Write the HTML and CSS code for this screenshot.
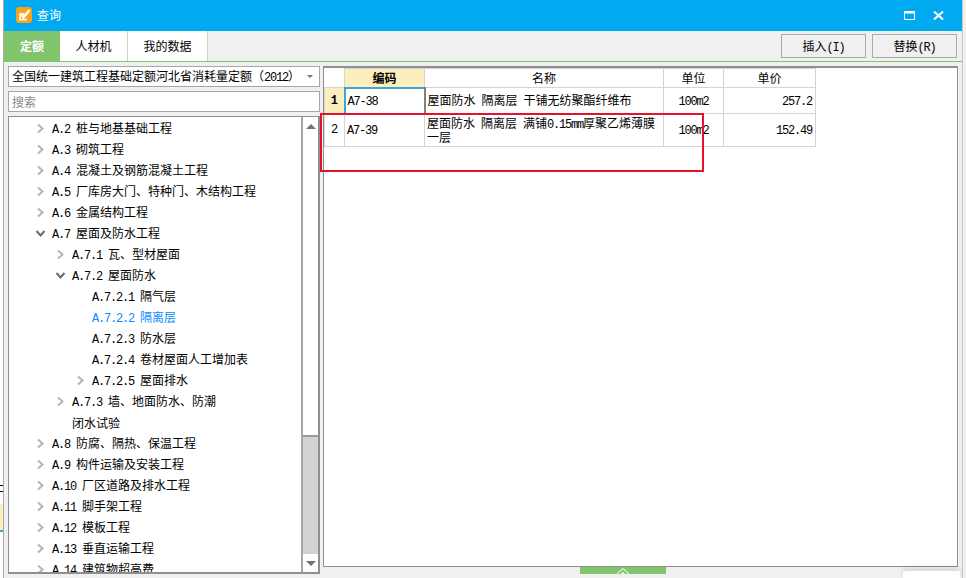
FILE: index.html
```html
<!DOCTYPE html>
<html lang="zh">
<head>
<meta charset="utf-8">
<title>查询</title>
<link rel="stylesheet" href="styles.css">
</head>
<body>
<div class="desk">
  <div class="backdrop"><span class="back-glyph">上</span><span class="back-cell"></span></div>
  <main class="window">
    <header class="titlebar">
      <svg class="logo" width="16" height="16" viewBox="0 0 16 16"><rect width="16" height="16" rx="3" fill="#f9a31a"/><path d="M3 6h6l-1 2H5v4h5l1-1v2.500H3z" fill="#fff3d8"/><path d="M5.500 8l2 2.500L13.500 3" fill="none" stroke="#fff" stroke-width="2.400"/></svg>
      <span class="title">查询</span>
      <span class="win-btns">
        <svg width="11" height="9" viewBox="0 0 11 9"><rect x="0.500" y="0.500" width="10" height="8" fill="none" stroke="#fff"/><rect x="0" y="0" width="11" height="2.500" fill="#fff"/></svg>
        <svg width="11" height="9" viewBox="0 0 11 9"><path d="M1 0.500l9 8M10 0.500l-9 8" stroke="#fff" stroke-width="2" fill="none"/></svg>
      </span>
    </header>
    <nav class="toolbar">
      <div class="tab tab-on">定额</div>
      <div class="tab tab-a">人材机</div>
      <div class="tab tab-b">我的数据</div>
      <div class="actions">
        <button class="btn">插入<span class="m">(I)</span></button>
        <button class="btn">替换<span class="m">(R)</span></button>
      </div>
    </nav>
    <section class="body">
      <aside class="left">
        <div class="combo"><span>全国统一建筑工程基础定额河北省消耗量定额（<span class="m">2012</span>）</span><i class="caret"></i></div>
        <div class="search">搜索</div>
        <div class="tree">
          <div class="list">
            <div class="row l1"><svg class="ar" viewBox="0 0 9 9"><path d="M2 0.500L6.500 4.500L2 8.500" /></svg><span><span class="m">A.2 </span>桩与地基基础工程</span></div>
            <div class="row l1"><svg class="ar" viewBox="0 0 9 9"><path d="M2 0.500L6.500 4.500L2 8.500" /></svg><span><span class="m">A.3 </span>砌筑工程</span></div>
            <div class="row l1"><svg class="ar" viewBox="0 0 9 9"><path d="M2 0.500L6.500 4.500L2 8.500" /></svg><span><span class="m">A.4 </span>混凝土及钢筋混凝土工程</span></div>
            <div class="row l1"><svg class="ar" viewBox="0 0 9 9"><path d="M2 0.500L6.500 4.500L2 8.500" /></svg><span><span class="m">A.5 </span>厂库房大门、特种门、木结构工程</span></div>
            <div class="row l1"><svg class="ar" viewBox="0 0 9 9"><path d="M2 0.500L6.500 4.500L2 8.500" /></svg><span><span class="m">A.6 </span>金属结构工程</span></div>
            <div class="row l1"><svg class="ar open" viewBox="0 0 9 9"><path d="M0.500 2L4.500 6.500L8.500 2" /></svg><span><span class="m">A.7 </span>屋面及防水工程</span></div>
            <div class="row l2"><svg class="ar" viewBox="0 0 9 9"><path d="M2 0.500L6.500 4.500L2 8.500" /></svg><span><span class="m">A.7.1 </span>瓦、型材屋面</span></div>
            <div class="row l2"><svg class="ar open" viewBox="0 0 9 9"><path d="M0.500 2L4.500 6.500L8.500 2" /></svg><span><span class="m">A.7.2 </span>屋面防水</span></div>
            <div class="row l3"><i class="ar"></i><span><span class="m">A.7.2.1 </span>隔气层</span></div>
            <div class="row l3 sel"><i class="ar"></i><span><span class="m">A.7.2.2 </span>隔离层</span></div>
            <div class="row l3"><i class="ar"></i><span><span class="m">A.7.2.3 </span>防水层</span></div>
            <div class="row l3"><i class="ar"></i><span><span class="m">A.7.2.4 </span>卷材屋面人工增加表</span></div>
            <div class="row l3"><svg class="ar" viewBox="0 0 9 9"><path d="M2 0.500L6.500 4.500L2 8.500" /></svg><span><span class="m">A.7.2.5 </span>屋面排水</span></div>
            <div class="row l2"><svg class="ar" viewBox="0 0 9 9"><path d="M2 0.500L6.500 4.500L2 8.500" /></svg><span><span class="m">A.7.3 </span>墙、地面防水、防潮</span></div>
            <div class="row l2"><i class="ar"></i><span>闭水试验</span></div>
            <div class="row l1"><svg class="ar" viewBox="0 0 9 9"><path d="M2 0.500L6.500 4.500L2 8.500" /></svg><span><span class="m">A.8 </span>防腐、隔热、保温工程</span></div>
            <div class="row l1"><svg class="ar" viewBox="0 0 9 9"><path d="M2 0.500L6.500 4.500L2 8.500" /></svg><span><span class="m">A.9 </span>构件运输及安装工程</span></div>
            <div class="row l1"><svg class="ar" viewBox="0 0 9 9"><path d="M2 0.500L6.500 4.500L2 8.500" /></svg><span><span class="m">A.10 </span>厂区道路及排水工程</span></div>
            <div class="row l1"><svg class="ar" viewBox="0 0 9 9"><path d="M2 0.500L6.500 4.500L2 8.500" /></svg><span><span class="m">A.11 </span>脚手架工程</span></div>
            <div class="row l1"><svg class="ar" viewBox="0 0 9 9"><path d="M2 0.500L6.500 4.500L2 8.500" /></svg><span><span class="m">A.12 </span>模板工程</span></div>
            <div class="row l1"><svg class="ar" viewBox="0 0 9 9"><path d="M2 0.500L6.500 4.500L2 8.500" /></svg><span><span class="m">A.13 </span>垂直运输工程</span></div>
            <div class="row l1"><svg class="ar" viewBox="0 0 9 9"><path d="M2 0.500L6.500 4.500L2 8.500" /></svg><span><span class="m">A.14 </span>建筑物超高费</span></div>
          </div>
          <div class="scroll">
            <div class="sbtn"><i class="tri-up"></i></div>
            <div class="thumb"></div>
            <div class="track"></div>
            <div class="sbtn"><i class="tri-down"></i></div>
          </div>
        </div>
      </aside>
      <div class="right">
        <table class="grid">
          <colgroup><col class="c0"><col class="c1"><col class="c2"><col class="c3"><col class="c4"></colgroup>
          <thead>
            <tr><th class="corner"></th><th class="hl">编码</th><th>名称</th><th>单位</th><th>单价</th></tr>
          </thead>
          <tbody>
            <tr class="r1"><td class="no hl">1</td><td class="code cur"><span class="m">A7-38</span></td><td class="name">屋面防水<span class="m"> </span>隔离层<span class="m"> </span>干铺无纺聚酯纤维布</td><td class="unit"><span class="m">100m2</span></td><td class="price"><span class="m">257.2</span></td></tr>
            <tr class="r2"><td class="no">2</td><td class="code"><span class="m">A7-39</span></td><td class="name">屋面防水<span class="m"> </span>隔离层<span class="m"> </span>满铺<span class="m">0.15mm</span>厚聚乙烯薄膜一层</td><td class="unit"><span class="m">100m2</span></td><td class="price"><span class="m">152.49</span></td></tr>
          </tbody>
        </table>
      </div>
    </section>
  </main>
</div>
<div class="redbox"></div>
<div class="pull"><svg width="14" height="7" viewBox="0 0 14 7"><path d="M1 7L7 1.500L13 7" fill="none" stroke="#cfe8c5" stroke-width="1.500"/><path d="M5 7L7 5L9 7z" fill="#fff"/></svg></div>
<div class="corner-chip"></div>
</body>
</html>
```

FILE: styles.css
```css
* { box-sizing: border-box; }
html, body { margin: 0; padding: 0; }
body {
  position: relative;
  width: 966px;
  height: 578px;
  overflow: hidden;
  background: #f0f0f0;
  font: 12px/1 "Noto Sans CJK SC", "Liberation Sans", sans-serif;
  color: #000;
}
.m { font-family: "Liberation Mono", monospace; font-size: 12px; letter-spacing: -1.2px; white-space: pre; line-height: 1; }
.desk { display: flex; height: 578px; }
.backdrop {
  flex: none;
  width: 4px;
  position: relative;
  overflow: hidden;
  background: #fff;
  border-right: 1px solid #a8a8a8;
}
.back-glyph { position: absolute; left: -7px; top: 481px; font-size: 12px; }
.back-cell { position: absolute; left: 0; top: 504px; width: 3px; height: 28px; background: #fdeebd; border-bottom: 2px solid #3aa6d8; }

.window { flex: none; width: 959px; background: #f0f0f0; border-right: 1px solid #c8c8c8; }
.titlebar {
  height: 31px;
  background: #00a9f0;
  display: flex;
  align-items: center;
  padding: 0 18px 1px 12px;
  color: #fff;
}
.logo { margin-right: 5px; margin-top: -1px; }
.title { font-size: 12px; }
.win-btns { margin-left: auto; display: flex; gap: 18px; align-items: center; }

.toolbar {
  height: 31px;
  display: flex;
  border-bottom: 1px solid #82c46c;
}
.tab {
  height: 30px;
  display: flex;
  align-items: center;
  justify-content: center;
  background: #fff;
  border-right: 1px solid #bfe0b2;
}
.tab-on { width: 56px; background: #82c46c; color: #fff; font-weight: 700; border: 0; }
.tab-a { width: 68px; }
.tab-b { width: 80px; }
.actions { margin-left: auto; display: flex; gap: 6px; padding: 3px 5px 0 0; }
.btn {
  width: 85px;
  height: 24px;
  padding: 1px 0 0;
  font: inherit;
  background: #f0f0f0;
  border: 1px solid #ababab;
  color: #000;
}

.body { display: flex; padding: 4px 0 0 4px; gap: 3px; }
.left { width: 312px; display: flex; flex-direction: column; gap: 4px; }
.combo {
  height: 21px;
  background: #fff;
  border: 1px solid #a6a6a6;
  display: flex;
  align-items: center;
  justify-content: space-between;
  padding: 0 6px 0 3px;
}
.caret { width: 0; height: 0; border: 3px solid transparent; border-top: 3px solid #777; margin-top: 3px; }
.search {
  height: 21px;
  background: #fff;
  border: 1px solid #a6a6a6;
  display: flex;
  align-items: center;
  padding-left: 3px;
  color: #8a8a8a;
}
.tree {
  height: 458px;
  display: flex;
  background: #fff;
  border: 1px solid #8f8f8f;
  border-width: 1px 2px 2px 1px;
  overflow: hidden;
}
.list { flex: 1; min-width: 0; padding-top: 1px; overflow: hidden; }
.row { display: flex; height: 21px; align-items: center; white-space: nowrap; }
.l1 { padding-left: 26px; }
.l2 { padding-left: 46px; }
.l3 { padding-left: 66px; }
.sel { color: #0a8cff; }
.ar {
  flex: none;
  width: 11px;
  height: 9px;
  margin-right: 6px;
  display: block;
  overflow: visible;
}
.ar path { fill: none; stroke: #b5b5b5; stroke-width: 2; }
.ar.open path { stroke: #6a6a6a; }
.scroll { flex: none; width: 17px; display: flex; flex-direction: column; background: #fff; border-left: 2px solid #a6a6a6; }
.sbtn { height: 18px; flex: none; display: flex; align-items: center; justify-content: center; background: #fff; }
.tri-up { width: 0; height: 0; border: 5px solid transparent; border-top: 0; border-bottom: 5px solid #6f7380; }
.tri-down { width: 0; height: 0; border: 5px solid transparent; border-bottom: 0; border-top: 5px solid #6f7380; }
.thumb { height: 302px; flex: none; background: #fff; border-bottom: 2px solid #9a9a9a; }
.track { flex: 1; background: #d2d2d2; }

.right {
  width: 635px;
  height: 501px;
  background: #fff;
  border: 1px solid #8f8f8f;
  border-width: 2px 1px 1px 1px;
}
.grid { border-collapse: collapse; table-layout: fixed; width: 491px; }
.c0 { width: 20px; }
.c1 { width: 80px; }
.c2 { width: 239px; }
.c3 { width: 60px; }
.c4 { width: 92px; }
.grid th, .grid td { border: 1px solid #d4d4d4; padding: 0; }
.grid th { height: 19px; font-weight: 400; font-size: 12px; text-align: center; }
.grid th.corner { border-left-color: transparent; border-top-color: transparent; }
.grid th.hl { background: #fdeebd; font-weight: 700; }
.r1 td { height: 26px; }
.r2 td { height: 33px; }
.no { text-align: center; font-family: "Liberation Mono", monospace; font-size: 12px; }
.no.hl { background: #fdeebd; font-weight: 700; }
.code { padding-left: 2px !important; }
.cur { border-style: solid !important; border-width: 2px !important; border-color: #3aa6d8 #808080 #808080 #3aa6d8 !important; }
.name { padding: 0 2px !important; line-height: 12px; }
.unit { text-align: center; }
.price { text-align: right; padding-right: 3px !important; }

.redbox {
  position: absolute;
  left: 320px;
  top: 113px;
  width: 384px;
  height: 59px;
  border: 2px solid #e8112d;
  pointer-events: none;
}
.pull {
  position: absolute;
  left: 580px;
  top: 567px;
  width: 86px;
  height: 7px;
  background: #82c46c;
  display: flex;
  justify-content: center;
}
.corner-chip {
  position: absolute;
  left: 903px;
  top: 571px;
  width: 57px;
  height: 7px;
  background: #fff;
  box-shadow: 0 -3px 6px rgba(0, 0, 0, .12);
}
```
